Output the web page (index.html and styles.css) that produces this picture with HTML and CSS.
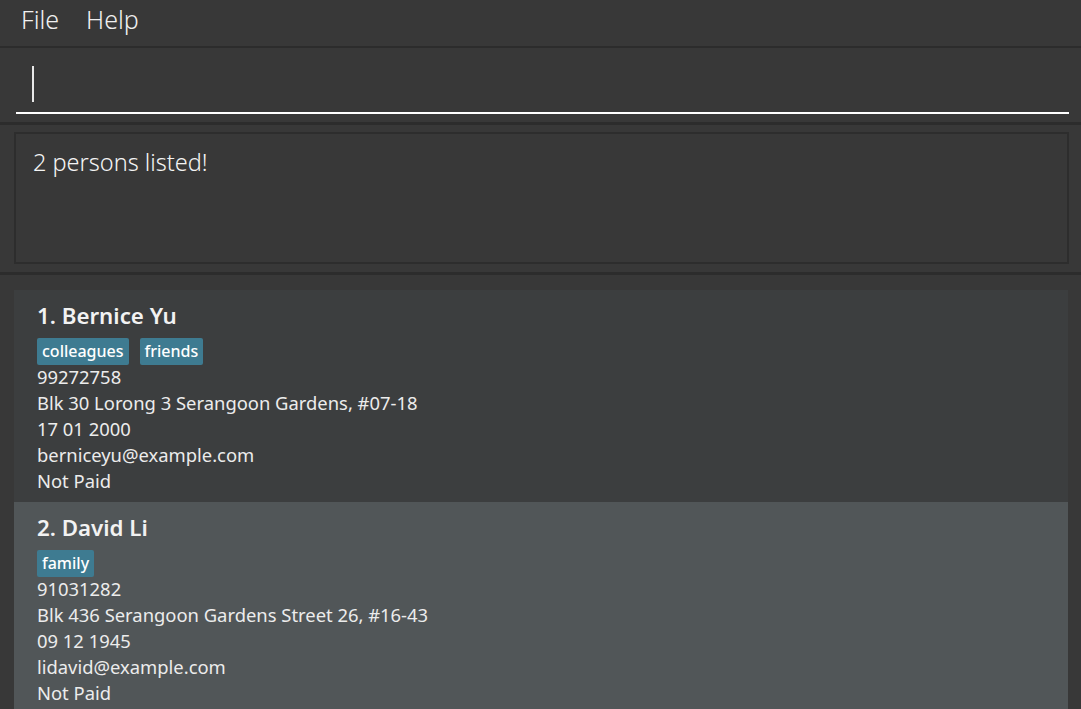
FILE: index.html
```html
<!DOCTYPE html>
<html>
<head>
<meta charset="utf-8">
<link rel="stylesheet" href="styles.css">
</head>
<body>
<div class="app">
  <div class="menubar">
    <span class="menu">File</span>
    <span class="menu">Help</span>
  </div>
  <div class="command-pane">
    <div class="command-box"><span class="caret"></span></div>
  </div>
  <div class="result-pane">
    <div class="result-box">2 persons listed!</div>
  </div>
  <div class="list-pane">
    <div class="card even">
      <div class="name">1. Bernice Yu</div>
      <div class="tags"><span class="tag">colleagues</span><span class="tag">friends</span></div>
      <div class="line">99272758</div>
      <div class="line">Blk 30 Lorong 3 Serangoon Gardens, #07-18</div>
      <div class="line">17 01 2000</div>
      <div class="line">berniceyu@example.com</div>
      <div class="line">Not Paid</div>
    </div>
    <div class="card odd">
      <div class="name">2. David Li</div>
      <div class="tags"><span class="tag">family</span></div>
      <div class="line">91031282</div>
      <div class="line">Blk 436 Serangoon Gardens Street 26, #16-43</div>
      <div class="line">09 12 1945</div>
      <div class="line">lidavid@example.com</div>
      <div class="line">Not Paid</div>
    </div>
  </div>
</div>
</body>
</html>
```
FILE: styles.css
```css
html, body {
  margin: 0;
  padding: 0;
  background: #383838;
  overflow: hidden;
}
.app {
  width: 1081px;
  height: 709px;
  display: flex;
  flex-direction: column;
  font-family: "Noto Sans", "Open Sans", sans-serif;
  color: #ffffff;
}
.menubar {
  flex: none;
  height: 48px;
  display: flex;
  align-items: center;
  gap: 27px;
  padding-left: 21px;
  padding-bottom: 9px;
  background: #383838;
  border-bottom: 2px solid #2c2c2c;
  box-sizing: border-box;
}
.menu {
  font-size: 25px;
  font-weight: 300;
  color: #f0f0f0;
}
.command-pane {
  flex: none;
  height: 77px;
  padding: 0 12px 0 16px;
  box-sizing: border-box;
  border-bottom: 3px solid #2c2c2c;
  display: flex;
  align-items: flex-start;
}
.command-box {
  flex: 1;
  height: 66px;
  border-bottom: 2px solid #ffffff;
  box-sizing: border-box;
  padding-left: 16px;
  padding-top: 18px;
}
.caret {
  display: block;
  width: 2px;
  height: 36px;
  background: #e8e8e8;
}
.result-pane {
  flex: none;
  height: 150px;
  padding: 7px 12px 0 14px;
  box-sizing: border-box;
  border-bottom: 3px solid #2c2c2c;
}
.result-box {
  height: 132px;
  box-sizing: border-box;
  border: 2px solid #2d2d2d;
  padding: 12px 0 0 17px;
  font-size: 23.5px;
  font-weight: 300;
  color: #f4f4f4;
}
.list-pane {
  flex: 1;
  padding: 15px 13px 0 14px;
}
.card {
  padding: 2px 0 0 23px;
  box-sizing: border-box;
}
.card.even {
  background: #3c3e3f;
  height: 212px;
}
.card.odd {
  background: #515658;
  height: 220px;
}
.name {
  font-size: 22.3px;
  font-weight: 600;
  line-height: 48px;
  color: #f2f2f2;
}
.tags {
  display: flex;
  gap: 11px;
  height: 28px;
  margin-top: -2px;
  margin-bottom: -2px;
}
.tag {
  background: #3e7b91;
  color: #ffffff;
  font-size: 16px;
  font-weight: 500;
  line-height: 27px;
  height: 27px;
  padding: 0 5px;
  border-radius: 2px;
}
.line {
  font-size: 18.4px;
  line-height: 26px;
  color: #ececec;
}
```
